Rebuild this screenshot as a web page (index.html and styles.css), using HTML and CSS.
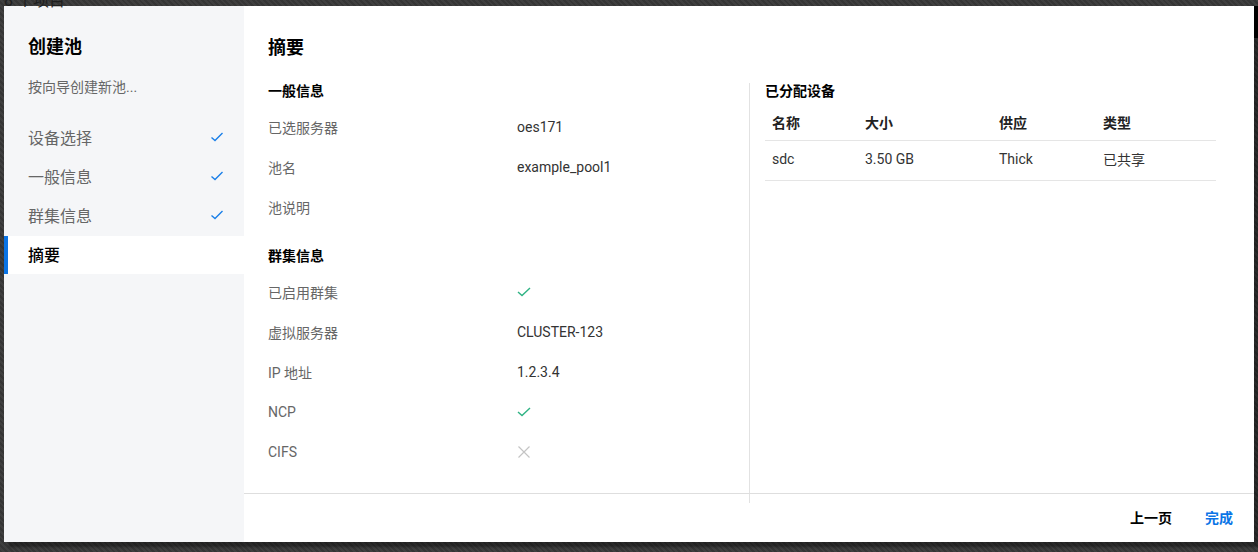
FILE: index.html
```html
<!DOCTYPE html>
<html lang="zh-CN">
<head>
<meta charset="utf-8">
<title>创建池</title>
<link rel="stylesheet" href="styles.css">
</head>
<body>
<div class="backdrop-text">8 个项目</div>
<div class="scroll-thumb"></div>
<div class="dialog">
  <aside class="sidebar">
    <h1 class="side-title">创建池</h1>
    <p class="side-sub">按向导创建新池...</p>
    <ul class="steps">
      <li class="step done"><span>设备选择</span><svg class="step-check" viewBox="0 0 14 14"><path d="M1.5 7.5 L5 10.5 L12.5 3"/></svg></li>
      <li class="step done"><span>一般信息</span><svg class="step-check" viewBox="0 0 14 14"><path d="M1.5 7.5 L5 10.5 L12.5 3"/></svg></li>
      <li class="step done"><span>群集信息</span><svg class="step-check" viewBox="0 0 14 14"><path d="M1.5 7.5 L5 10.5 L12.5 3"/></svg></li>
      <li class="step active"><span>摘要</span></li>
    </ul>
  </aside>
  <main class="main">
    <h2 class="main-title">摘要</h2>
    <div class="columns">
      <section class="col-left">
        <h3 class="sec-title">一般信息</h3>
        <div class="row"><span class="label">已选服务器</span><span class="value">oes171</span></div>
        <div class="row"><span class="label">池名</span><span class="value">example_pool1</span></div>
        <div class="row"><span class="label">池说明</span><span class="value"></span></div>
        <h3 class="sec-title sec-gap">群集信息</h3>
        <div class="row"><span class="label">已启用群集</span><span class="value"><svg class="ok" viewBox="0 0 14 14"><path d="M1 7 L5 10.5 L13 3"/></svg></span></div>
        <div class="row"><span class="label">虚拟服务器</span><span class="value">CLUSTER-123</span></div>
        <div class="row"><span class="label">IP 地址</span><span class="value">1.2.3.4</span></div>
        <div class="row"><span class="label">NCP</span><span class="value"><svg class="ok" viewBox="0 0 14 14"><path d="M1 7 L5 10.5 L13 3"/></svg></span></div>
        <div class="row"><span class="label">CIFS</span><span class="value"><svg class="no" viewBox="0 0 14 14"><path d="M1.5 1.5 L12.5 12.5 M12.5 1.5 L1.5 12.5"/></svg></span></div>
      </section>
      <section class="col-right">
        <h3 class="sec-title">已分配设备</h3>
        <table class="devices">
          <thead>
            <tr><th class="c1">名称</th><th class="c2">大小</th><th class="c3">供应</th><th class="c4">类型</th></tr>
          </thead>
          <tbody>
            <tr><td>sdc</td><td>3.50 GB</td><td>Thick</td><td>已共享</td></tr>
          </tbody>
        </table>
      </section>
    </div>
    <footer class="footer">
      <button class="btn btn-prev">上一页</button>
      <button class="btn btn-done">完成</button>
    </footer>
  </main>
</div>
</body>
</html>
```

FILE: styles.css
```css
* { box-sizing: border-box; }
html, body { margin: 0; padding: 0; }
body {
  width: 1258px;
  height: 552px;
  overflow: hidden;
  position: relative;
  font-family: "Roboto", "Noto Sans CJK SC", sans-serif;
  font-size: 14px;
  background: repeating-linear-gradient(45deg, #353535 0 2px, #3f3f3f 2px 4px);
  padding: 6px 0 0 4px;
}
.backdrop-text {
  position: absolute;
  left: 4px;
  top: -9px;
  font-size: 16px;
  color: #1e1e1e;
  line-height: 20px;
}
.scroll-thumb {
  position: absolute;
  right: 0;
  top: 6px;
  width: 4px;
  height: 32px;
  background: #000;
}
.dialog {
  width: 1250px;
  height: 536px;
  display: flex;
  background: #fff;
  box-shadow: 5px 5px 2px rgba(0,0,0,0.35);
}
.sidebar {
  width: 240px;
  flex: none;
  background: #f5f6f8;
  padding-top: 29px;
}
.side-title {
  margin: 0 0 0 24px;
  font-size: 18px;
  line-height: 24px;
  font-weight: 700;
  color: #000;
}
.side-sub {
  margin: 19px 0 0 24px;
  font-size: 14px;
  line-height: 18px;
  color: #666;
}
.steps {
  list-style: none;
  margin: 23px 0 0;
  padding: 0;
}
.step {
  height: 39px;
  display: flex;
  align-items: center;
  justify-content: space-between;
  padding: 0 20px 3px 24px;
  font-size: 16px;
  color: #666;
}
.step-check {
  width: 14px;
  height: 14px;
  fill: none;
  stroke: #1a7fe8;
  stroke-width: 1.4;
}
.step.active {
  background: #fff;
  color: #000;
  font-weight: 500;
  box-shadow: inset 4px 0 0 #0a74e6;
  height: 38px;
}
.main {
  flex: 1;
  display: flex;
  flex-direction: column;
  min-width: 0;
}
.main-title {
  margin: 30px 0 0 24px;
  font-size: 18px;
  line-height: 24px;
  font-weight: 700;
  color: #000;
}
.columns {
  display: flex;
  margin-top: 21px;
  height: 422px;
}
.col-left {
  width: 505px;
  padding-left: 24px;
}
.col-right {
  flex: 1;
  border-left: 1px solid #e2e2e2;
  padding-left: 15px;
  margin-top: 2px;
  padding-top: 0;
}
.sec-title {
  margin: 0;
  font-size: 14px;
  line-height: 20px;
  font-weight: 700;
  color: #000;
  margin-bottom: 6px;
}
.col-right .sec-title { margin-top: -2px; margin-bottom: 4px; }
.sec-gap { margin-top: 19px; }
.row {
  display: flex;
  align-items: center;
  height: 40px;
}
.label {
  width: 249px;
  color: #666;
}
.value {
  color: #333;
  display: flex;
  align-items: center;
}
.ok, .no {
  width: 14px;
  height: 14px;
  fill: none;
  stroke-width: 1.4;
}
.ok { stroke: #2fb384; }
.no { stroke: #c4c4c4; stroke-width: 1.2; }
.devices {
  width: 451px;
  border-collapse: collapse;
  table-layout: fixed;
}
.devices th, .devices td {
  text-align: left;
  padding: 0 0 0 7px;
  border-bottom: 1px solid #e5e5e5;
}
.devices th {
  height: 35px;
  font-weight: 700;
  color: #222;
}
.devices td {
  height: 40px;
  padding-bottom: 2px;
  color: #333;
}
.c1 { width: 93px; }
.c2 { width: 134px; }
.c3 { width: 104px; }
.c4 { width: 120px; }
.footer {
  margin-top: -10px;
  border-top: 1px solid #dedede;
  height: 48px;
  display: flex;
  justify-content: flex-end;
  align-items: center;
  padding: 0 21px 2px 0;
  gap: 33px;
}
.btn {
  border: 0;
  background: none;
  padding: 0;
  font-family: inherit;
  font-size: 14px;
  font-weight: 700;
  cursor: pointer;
}
.btn-prev { color: #000; }
.btn-done { color: #0a74e6; }
```
